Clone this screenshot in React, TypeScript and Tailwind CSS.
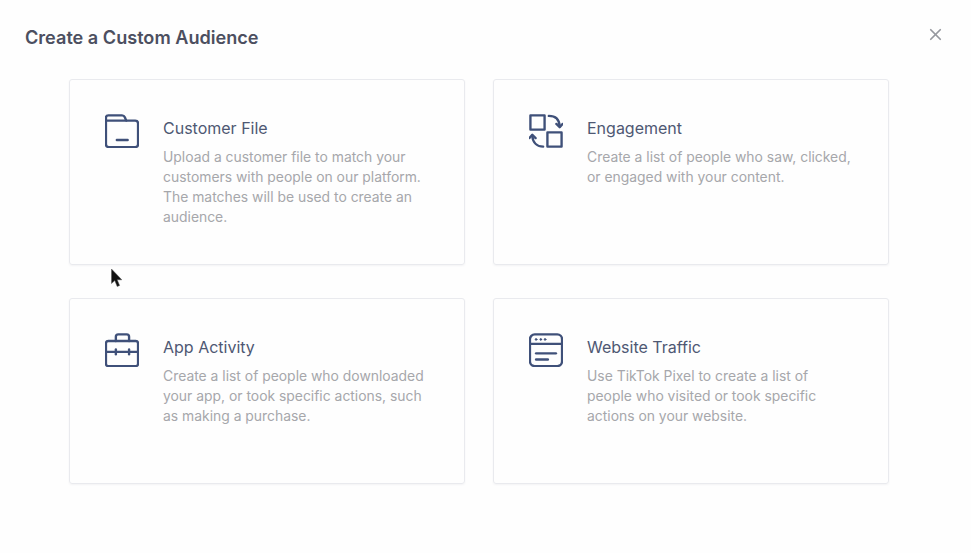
import React from "react";
import { X } from "lucide-react";

const FolderIcon = () => (
  <svg width="34" height="34" viewBox="0 0 36 36" fill="none" stroke="#3f5079" strokeWidth="2.500" strokeLinejoin="round" strokeLinecap="round">
    <path d="M1 4C1 2.600 2 1.500 3.500 1.500H18C19.500 1.500 20.500 2.300 21 3.500L22.500 7H32C33.700 7 35 8.300 35 10V32C35 33.700 33.700 35 32 35H4C2.300 35 1 33.700 1 32Z" />
    <path d="M1 7H22.500" />
    <path d="M12.500 27.500H24" />
  </svg>
);

const EngagementIcon = () => (
  <svg width="34" height="34" viewBox="0 0 36 36" fill="none" stroke="#3f5079" strokeWidth="2.500" strokeLinejoin="round" strokeLinecap="round">
    <rect x="1.500" y="1.500" width="15" height="15" />
    <rect x="19.500" y="19.500" width="15" height="15" />
    <path d="M21 2C27 2 32 5 32.500 13" />
    <path d="M29 10.500L32.500 14L35.500 10.500" />
    <path d="M15 34.500C9 34.500 4 31 3.500 23" />
    <path d="M0.500 25.500L3.500 22L7 25.500" />
  </svg>
);

const BriefcaseIcon = () => (
  <svg width="34" height="34" viewBox="0 0 36 36" fill="none" stroke="#3f5079" strokeWidth="2.500" strokeLinejoin="round" strokeLinecap="round">
    <rect x="1" y="8.500" width="34" height="26.500" rx="2.500" />
    <path d="M11.500 8.500V4C11.500 2.500 12.500 1.500 14 1.500H23C24.500 1.500 25.500 2.500 25.500 4V8.500" />
    <path d="M1 20H35" />
    <path d="M11.500 17.500V22.500" />
    <path d="M25.500 17.500V22.500" />
  </svg>
);

const BrowserIcon = () => (
  <svg width="34" height="34" viewBox="0 0 36 36" fill="none" stroke="#3f5079" strokeWidth="2.500" strokeLinejoin="round" strokeLinecap="round">
    <rect x="1" y="1.500" width="34" height="33.500" rx="5" />
    <path d="M1 11.500H35" />
    <path d="M7.500 21.500H28.500" />
    <path d="M7.500 28H20" />
    <circle cx="7.500" cy="6.800" r="0.900" fill="#3f5079" strokeWidth="1" />
    <circle cx="12.500" cy="6.800" r="0.900" fill="#3f5079" strokeWidth="1" />
    <circle cx="17" cy="6.800" r="0.900" fill="#3f5079" strokeWidth="1" />
  </svg>
);

const CARDS = [
  {
    icon: <FolderIcon />,
    title: "Customer File",
    lines: ["Upload a customer file to match your", "customers with people on our platform.", "The matches will be used to create an", "audience."],
  },
  {
    icon: <EngagementIcon />,
    title: "Engagement",
    lines: ["Create a list of people who saw, clicked,", "or engaged with your content."],
  },
  {
    icon: <BriefcaseIcon />,
    title: "App Activity",
    lines: ["Create a list of people who downloaded", "your app, or took specific actions, such", "as making a purchase."],
  },
  {
    icon: <BrowserIcon />,
    title: "Website Traffic",
    lines: ["Use TikTok Pixel to create a list of", "people who visited or took specific", "actions on your website."],
  },
];

const App = () => {
  return (
    <div className="relative h-[553px] w-[971px] overflow-hidden bg-[#fefefe] font-['Inter',sans-serif]">
      <div className="flex items-start justify-between pl-[25px] pr-[26px] pt-[26px]">
        <h1 className="text-[18.100px] leading-[22px] font-semibold text-[#4c4f60]">Create a Custom Audience</h1>
        <X size={19} strokeWidth={2.200} className="-mt-[1px] text-[#96989f]" />
      </div>

      <div className="mt-[31px] ml-[69px] grid w-[820px] grid-cols-2 gap-x-[28px] gap-y-[33px]">
        {CARDS.map((card) => (
          <div key={card.title} className="flex h-[186px] gap-[24px] rounded-[3px] border border-[#e9eaee] pl-[35px] pt-[34px] shadow-[0_1px_2px_rgba(30,40,80,0.05)]">
            <div className="shrink-0">{card.icon}</div>
            <div className="pt-[2px]">
              <h2 className="text-[16px] leading-[24px] text-[#4e5873]">{card.title}</h2>
              <div className="mt-[7px] text-[13.900px] leading-[20px] text-[#a6a7ab]">
                {card.lines.map((line) => (
                  <p key={line}>{line}</p>
                ))}
              </div>
            </div>
          </div>
        ))}
      </div>

      {/* mouse pointer caught in the recording */}
      <svg className="absolute left-[110px] top-[268px]" width="14" height="21" viewBox="0 0 14 21">
        <path d="M1.500 1V15.500L4.800 12.600L7.200 18.500L9.600 17.500L7.200 11.800H11.800Z" fill="#111" stroke="#555" strokeWidth="0.500" />
      </svg>
    </div>
  );
};

export default App;
